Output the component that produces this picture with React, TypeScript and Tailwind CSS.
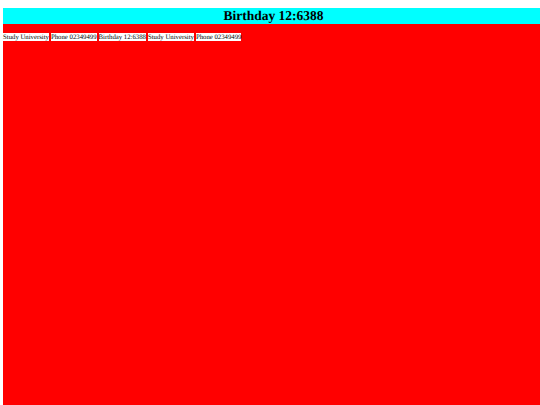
const items = [
  "Study University",
  "Phone 02349499",
  "Birthday 12:6388",
  "Study University",
  "Phone 02349499",
];

export default function App() {
  return (
    <div className="h-[405px] overflow-hidden bg-white pt-2 pl-[3px] font-['Liberation_Serif',serif] text-black [text-rendering:geometricPrecision]">
      {/* Title bar */}
      <div className="h-4 bg-[#00ffff] pl-1 text-center text-[13.5px] leading-4 font-bold">
        Birthday 12:6388
      </div>

      {/* Red body */}
      <div className="h-[381px] bg-[#ff0000] pt-[9px]">
        <div className="flex gap-[2px]">
          {items.map((item, index) => (
            <span
              key={index}
              className="h-2 bg-white text-[6.75px] leading-[10px] whitespace-nowrap"
            >
              {item}
            </span>
          ))}
        </div>
      </div>
    </div>
  );
}
